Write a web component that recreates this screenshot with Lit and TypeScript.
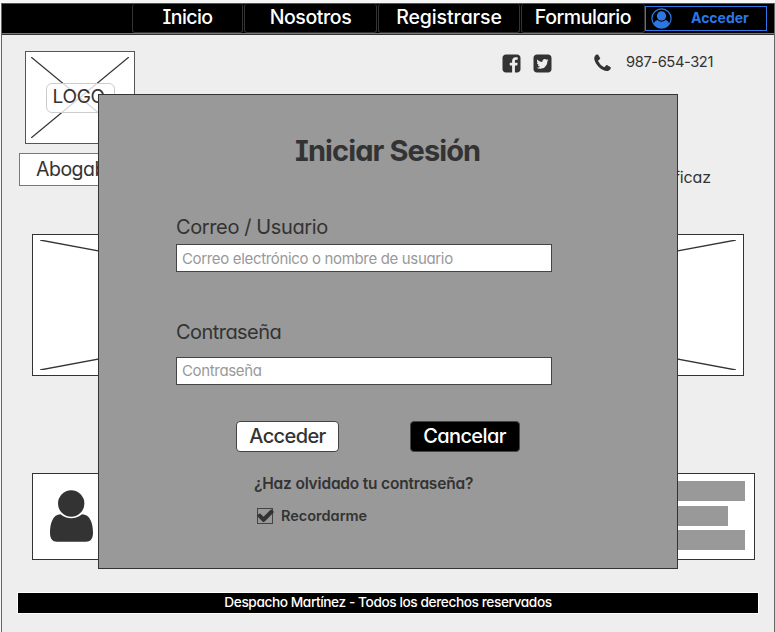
import { LitElement, html, css, svg } from "lit";
import { customElement, property } from "lit/decorators.js";

const ICONS: Record<string, string> = {
  facebook:
    "M1376 128q119 0 203.500 84.500t84.500 203.500v960q0 119-84.500 203.500t-203.500 84.500h-188v-595h199l30-232h-229v-148q0-56 23.500-84t91.500-28l122-1v-207q-63-9-178-9-136 0-217.500 80t-81.500 226v171h-200v232h200v595h-532q-119 0-203.500-84.500t-84.500-203.500v-960q0-119 84.500-203.500t203.500-84.500h960z",
  twitter:
    "M1408 610q-56 25-121 34 68-40 93-117-65 38-134 51-61-66-153-66-87 0-148.500 61.500t-61.500 148.500q0 29 5 48-129-7-242-65t-192-155q-29 50-29 106 0 114 91 175-47-1-100-26v2q0 75 50 133.500t123 72.500q-29 8-51 8-13 0-39-4 21 63 74.500 104t121.500 42q-116 90-261 90-26 0-50-3 148 94 322 94 112 0 210-35.500t168-95 120.500-137 75-162 24.500-168.500q0-18-1-27 63-45 105-109zM1664 416v960q0 119-84.500 203.500t-203.500 84.500h-960q-119 0-203.500-84.500t-84.500-203.500v-960q0-119 84.500-203.500t203.500-84.500h960q119 0 203.500 84.500t84.500 203.500z",
  phone:
    "M1600 1240q0 27-10 70.500t-21 68.500q-21 50-122 106-94 51-186 51-27 0-53-3.500t-57.500-12.500-47-14.500-55.500-20.500-49-18q-98-35-175-83-127-79-264-216t-216-264q-48-77-83-175-3-9-18-49t-20.500-55.500-14.500-47-12.500-57.500-3.500-53q0-92 51-186 56-101 106-122 25-11 68.500-21t70.500-10q14 0 21 3 18 6 53 76 11 19 30 54t35 63.500 31 53.500q3 4 17.500 25t21.500 35.500 7 28.500q0 20-28.500 50t-62 55-62 53-28.500 46q0 9 5 22.500t8.500 20.500 14 24 11.500 19q76 137 174 235t235 174q2 1 19 11.500t24 14 20.500 8.500 22.500 5q18 0 46-28.500t53-62 55-62 50-28.500q14 0 28.500 7t35.500 21.500 25 17.500q25 15 53.500 31t63.500 35 54 30q70 35 76 53 3 7 3 21z",
  check:
    "M1671 566q0 40-28 68l-724 724-136 136q-28 28-68 28t-68-28l-136-136-362-362q-28-28-28-68t28-68l136-136q28-28 68-28t68 28l294 295 656-657q28-28 68-28t68 28l136 136q28 28 28 68z",
};

@customElement("ui-icon")
class UiIcon extends LitElement {
  @property() name = "";
  static styles = css`
    :host { display: block; }
    svg { display: block; width: 100%; height: 100%; fill: currentColor; }
  `;
  render() {
    return html`<svg viewBox="0 0 1792 1792">${svg`<path d=${ICONS[this.name]}></path>`}</svg>`;
  }
}

@customElement("top-nav")
class TopNav extends LitElement {
  static styles = css`
    :host {
      display: flex; box-sizing: border-box; height: 32px; background: #000;
      border-top: 1px solid #555; border-bottom: 1px solid #333;
      box-shadow: inset 0 -1px #777; padding-left: 130px; color: #fff;
    }
    .item {
      box-sizing: border-box; height: 29px; border: 1px solid #333; border-top: 0;
      border-radius: 3px; text-align: center; font-size: 19.5px; line-height: 27px;
      font-weight: 500; margin-right: 1px; white-space: nowrap;
    }
    .inicio { width: 111px; letter-spacing: -0.6px; }
    .nosotros { width: 133px; letter-spacing: -0.4px; }
    .registrarse { width: 142px; letter-spacing: -0.1px; }
    .formulario { width: 124px; margin-right: 0; letter-spacing: -0.45px; }
    .login {
      box-sizing: border-box; width: 122px; height: 25px; margin-top: 2px; display: flex;
      align-items: center; border: 1px solid #2b78e4; color: #2b78e4; padding-left: 5px;
    }
    .login svg { width: 21px; height: 21px; display: block; }
    .login span { margin-left: 19px; font-size: 14px; font-weight: 700; line-height: 22px; margin-top: -2px; }
  `;
  render() {
    return html`
      <div class="item inicio">Inicio</div>
      <div class="item nosotros">Nosotros</div>
      <div class="item registrarse">Registrarse</div>
      <div class="item formulario">Formulario</div>
      <div class="login">
        <svg viewBox="0 0 21 21">
          <circle cx="10.5" cy="10.5" r="9.6" fill="none" stroke="#2b78e4" stroke-width="1.2" />
          <path d="M2.8 16C3.2 13.6 4.500 12.500 6.600 12c2.200 2.200 5.600 2.200 7.800 0 2.100 .5 3.400 1.600 3.800 4-1.700 2.600-4.600 4-7.700 4s-6-1.400-7.700-4z" fill="#2b78e4" />
          <circle cx="10.500" cy="8" r="4.700" fill="#2b78e4" />
        </svg>
        <span>Acceder</span>
      </div>
    `;
  }
}

@customElement("login-dialog")
class LoginDialog extends LitElement {
  static styles = css`
    :host {
      display: flex; flex-direction: column; box-sizing: border-box; width: 580px; height: 475px;
      background: #999; border: 1px solid #333; padding: 0 126px 0 77px; color: #333;
    }
    h1 { margin: 36px 0 0 119px; font-size: 29px; line-height: 40px; font-weight: 700; white-space: nowrap; letter-spacing: -0.9px; }
    label { display: block; font-size: 20px; line-height: 24px; }
    .user { margin-top: 44px; letter-spacing: -0.38px; }
    .pass { margin-top: 48px; letter-spacing: -0.55px; }
    input {
      display: block; box-sizing: border-box; width: 376px; height: 28px; border: 1px solid #444;
      background: #fff; padding: 0 5px; font: inherit; font-size: 15px; border-radius: 0;
      font-feature-settings: inherit; outline: 0; margin: 5px 0 0; letter-spacing: -0.34px;
    }
    .pass + input { margin-top: 12.500px; }
    input::placeholder { color: #999; opacity: 1; }
    .actions { display: flex; margin: 36.500px 0 0 60px; gap: 70.500px; }
    button {
      box-sizing: border-box; height: 31px; border: 1px solid #444; border-radius: 4px; padding: 0;
      font: inherit; font-feature-settings: inherit; font-size: 20px; line-height: 27px; font-weight: 500;
      width: 103px; background: #fff; color: #333; letter-spacing: -0.6px;
    }
    .cancel { width: 110px; background: #000; color: #fff; }
    .forgot { margin: 22px 0 0 78px; font-size: 15.5px; line-height: 20px; font-weight: 600; white-space: nowrap; letter-spacing: -0.19px; }
    .remember { display: flex; margin: 14px 0 0 81px; font-size: 14.5px; line-height: 16px; font-weight: 600; }
    .box { box-sizing: border-box; width: 16px; height: 16px; border: 1px solid #444; margin-right: 8px; }
    .box ui-icon { width: 19px; height: 19px; margin: -3px 0 0 -2px; }
  `;
  render() {
    return html`
      <h1>Iniciar Sesión</h1>
      <label class="user">Correo / Usuario</label>
      <input placeholder="Correo electrónico o nombre de usuario" />
      <label class="pass">Contraseña</label>
      <input type="password" placeholder="Contraseña" />
      <div class="actions"><button>Acceder</button><button class="cancel">Cancelar</button></div>
      <div class="forgot">¿Haz olvidado tu contraseña?</div>
      <div class="remember"><div class="box"><ui-icon name="check"></ui-icon></div>Recordarme</div>
    `;
  }
}

@customElement("app-root")
class AppRoot extends LitElement {
  static styles = css`
    :host {
      display: block; position: relative; box-sizing: border-box; width: 775px; height: 632px;
      overflow: hidden; background: #f6f6f6; padding: 3px 0 0 1px; color: #333;
      font-family: Inter, "Liberation Sans", sans-serif;
      font-feature-settings: "cv11" 1, "cv08" 1;
    }
    .frame { box-sizing: border-box; width: 774px; height: 629px; border: solid #666; border-width: 0 1px; background: #eee; }
    header { display: flex; height: 199px; box-sizing: border-box; padding: 16px 62px 0 17px; justify-content: space-between; }
    .logo {
      box-sizing: border-box; width: 110px; height: 93px; margin-left: 6px; border: 1px solid #555;
      background: #fff; display: grid; place-items: center;
    }
    .logo > * { grid-area: 1 / 1; }
    .logo svg { width: 98px; height: 81px; }
    line { stroke: #333; stroke-width: 1.300; }
    .tag {
      box-sizing: border-box; width: 69px; height: 30px; border: 1px solid #ccc; border-radius: 6px; z-index: 1;
      background: rgba(255, 255, 255, 0.8); font-size: 19px; line-height: 25px; padding-left: 6px; letter-spacing: -0.3px;
    }
    .brand {
      box-sizing: border-box; width: 140px; height: 33px; margin-top: 9px; border: 1px solid #3f83e2;
      background: #fff; font-size: 19.500px; line-height: 31px; padding-left: 16px; letter-spacing: -0.5px;
    }
    .contact { display: flex; align-items: center; height: 24px; font-size: 14.700px; letter-spacing: -0.4px; }
    .contact span { width: 86px; white-space: nowrap; margin-top: -2px; }
    .contact ui-icon { width: 21px; height: 21px; }
    .contact .tw { margin-left: 10px; }
    .contact .ph { margin: 0 13px 0 39px; }
    .slogan { margin: 91px 1px 0 0; text-align: right; font-size: 16px; line-height: 22px; letter-spacing: -0.1px; }
    .banner { box-sizing: border-box; width: 712px; height: 142px; margin-left: 30px; border: 1px solid #333; background: #fff; padding: 5px; }
    .banner svg { display: block; width: 700px; height: 130px; }
    .profile {
      box-sizing: border-box; width: 723px; height: 87px; margin: 97px 0 0 30px; border: 1px solid #333; background: #fff;
      display: flex; justify-content: space-between; padding: 7px 9px 0 17px;
    }
    .profile svg { width: 44px; height: 54px; margin-top: 9px; }
    .bars { display: flex; flex-direction: column; gap: 4.500px; width: 90px; }
    .bar { height: 20px; background: #999; }
    .bar.short { width: 73px; }
    footer {
      box-sizing: border-box; width: 740px; height: 20px; margin: 33px 0 0 16px; background: #000; color: #fff;
      font-size: 13.700px; font-weight: 500; line-height: 18px; text-align: center; outline: 1px solid #fff; white-space: nowrap;
      letter-spacing: -0.42px;
    }
    login-dialog { position: absolute; left: 98px; top: 94px; z-index: 2; }
  `;
  render() {
    return html`
      <div class="frame">
        <top-nav></top-nav>
        <header>
          <div>
            <div class="logo">
              <svg viewBox="0 0 98 81"><line x1="0" y1="0" x2="98" y2="81" /><line x1="98" y1="0" x2="0" y2="81" /></svg>
              <div class="tag">LOGO</div>
            </div>
            <div class="brand">Abogab</div>
          </div>
          <div>
            <div class="contact">
              <ui-icon name="facebook"></ui-icon><ui-icon class="tw" name="twitter"></ui-icon>
              <ui-icon class="ph" name="phone"></ui-icon><span>987-654-321</span>
            </div>
            <div class="slogan">ficaz</div>
          </div>
        </header>
        <div class="banner">
          <svg viewBox="0 0 701 131"><line x1="0" y1="0" x2="701" y2="131" /><line x1="701" y1="0" x2="0" y2="131" /></svg>
        </div>
        <div class="profile">
          <svg viewBox="0 0 44 54">
            <circle cx="21.200" cy="13.500" r="13.200" fill="#333" />
            <path d="M10.500 24.300c6.300 5.300 15.200 5.300 21.500 0 8 0 11 9 11 18.500 0 6-2.500 9-7 9H7c-4.500 0-7-3-7-9 0-9.500 3-18.500 10.500-18.500z" fill="#333" />
          </svg>
          <div class="bars"><div class="bar"></div><div class="bar short"></div><div class="bar"></div></div>
        </div>
        <footer>Despacho Martínez - Todos los derechos reservados</footer>
      </div>
      <login-dialog></login-dialog>
    `;
  }
}
